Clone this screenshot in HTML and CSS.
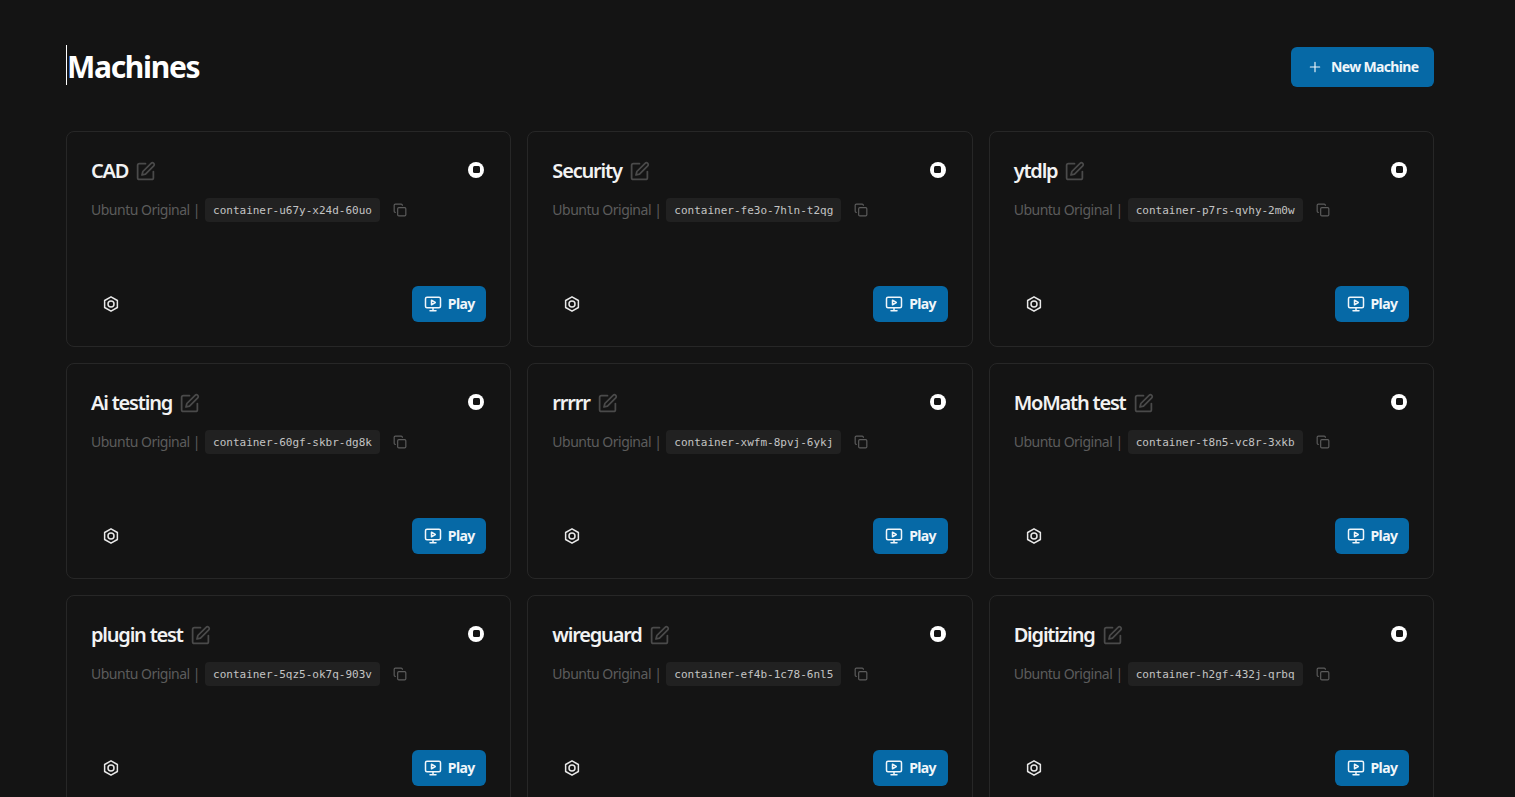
FILE: index.html
```html
<!DOCTYPE html>
<html lang="en">
<head>
  <meta charset="UTF-8" />
  <meta name="viewport" content="width=device-width, initial-scale=1.0" />
  <title>Machines</title>
  <link rel="stylesheet" href="styles.css">
</head>
<body>
  <svg class="icon-defs" width="0" height="0" aria-hidden="true">
    <symbol id="i-edit" viewBox="0 0 24 24" fill="none" stroke="currentColor" stroke-width="2" stroke-linecap="round" stroke-linejoin="round">
      <path d="M12 3H5a2 2 0 0 0-2 2v14a2 2 0 0 0 2 2h14a2 2 0 0 0 2-2v-7" />
      <path d="M18.4 2.600a2.100 2.100 0 1 1 3 3L12 15l-4 1 1-4z" />
    </symbol>
    <symbol id="i-copy" viewBox="0 0 24 24" fill="none" stroke="currentColor" stroke-width="2" stroke-linecap="round" stroke-linejoin="round">
      <rect x="8" y="8" width="14" height="14" rx="2" />
      <path d="M4 16c-1.100 0-2-.9-2-2V4c0-1.100.9-2 2-2h10c1.100 0 2 .9 2 2" />
    </symbol>
    <symbol id="i-settings" viewBox="0 0 24 24" fill="none" stroke="currentColor" stroke-width="2" stroke-linecap="round" stroke-linejoin="round">
      <path d="M12 2.500l8.500 4.800v9.400L12 21.500l-8.500-4.800V7.300z" />
      <circle cx="12" cy="12" r="4" />
    </symbol>
    <symbol id="i-play" viewBox="0 0 24 24" fill="none" stroke="currentColor" stroke-width="2" stroke-linecap="round" stroke-linejoin="round">
      <rect x="2" y="3" width="20" height="14" rx="2" />
      <path d="M12 17v4M8 21h8" />
      <path d="M10 7l5 3-5 3z" />
    </symbol>
  </svg>

  <main class="page">
    <!-- Header -->
    <header class="page-header">
      <h1 class="page-title">Machines</h1>
      <button class="btn btn-new">
        <svg class="btn-plus" viewBox="0 0 24 24" fill="none" stroke="currentColor" stroke-width="2" stroke-linecap="round"><path d="M5 12h14M12 5v14" /></svg>
        New Machine
      </button>
    </header>

    <!-- Machine cards -->
    <section class="machine-grid">
      <article class="card">
        <div class="card-top">
          <h2 class="card-name">CAD <svg class="icon-edit"><use href="#i-edit" /></svg></h2>
          <span class="status-dot"></span>
        </div>
        <div class="card-meta">
          <span class="os-name">Ubuntu Original |</span>
          <code class="container-id">container-u67y-x24d-60uo</code>
          <svg class="icon-copy"><use href="#i-copy" /></svg>
        </div>
        <div class="card-bottom">
          <svg class="icon-settings"><use href="#i-settings" /></svg>
          <button class="btn btn-play"><svg class="icon-play"><use href="#i-play" /></svg>Play</button>
        </div>
      </article>
      <article class="card">
        <div class="card-top">
          <h2 class="card-name">Security <svg class="icon-edit"><use href="#i-edit" /></svg></h2>
          <span class="status-dot"></span>
        </div>
        <div class="card-meta">
          <span class="os-name">Ubuntu Original |</span>
          <code class="container-id">container-fe3o-7hln-t2qg</code>
          <svg class="icon-copy"><use href="#i-copy" /></svg>
        </div>
        <div class="card-bottom">
          <svg class="icon-settings"><use href="#i-settings" /></svg>
          <button class="btn btn-play"><svg class="icon-play"><use href="#i-play" /></svg>Play</button>
        </div>
      </article>
      <article class="card">
        <div class="card-top">
          <h2 class="card-name">ytdlp <svg class="icon-edit"><use href="#i-edit" /></svg></h2>
          <span class="status-dot"></span>
        </div>
        <div class="card-meta">
          <span class="os-name">Ubuntu Original |</span>
          <code class="container-id">container-p7rs-qvhy-2m0w</code>
          <svg class="icon-copy"><use href="#i-copy" /></svg>
        </div>
        <div class="card-bottom">
          <svg class="icon-settings"><use href="#i-settings" /></svg>
          <button class="btn btn-play"><svg class="icon-play"><use href="#i-play" /></svg>Play</button>
        </div>
      </article>
      <article class="card">
        <div class="card-top">
          <h2 class="card-name">Ai testing <svg class="icon-edit"><use href="#i-edit" /></svg></h2>
          <span class="status-dot"></span>
        </div>
        <div class="card-meta">
          <span class="os-name">Ubuntu Original |</span>
          <code class="container-id">container-60gf-skbr-dg8k</code>
          <svg class="icon-copy"><use href="#i-copy" /></svg>
        </div>
        <div class="card-bottom">
          <svg class="icon-settings"><use href="#i-settings" /></svg>
          <button class="btn btn-play"><svg class="icon-play"><use href="#i-play" /></svg>Play</button>
        </div>
      </article>
      <article class="card">
        <div class="card-top">
          <h2 class="card-name">rrrrr <svg class="icon-edit"><use href="#i-edit" /></svg></h2>
          <span class="status-dot"></span>
        </div>
        <div class="card-meta">
          <span class="os-name">Ubuntu Original |</span>
          <code class="container-id">container-xwfm-8pvj-6ykj</code>
          <svg class="icon-copy"><use href="#i-copy" /></svg>
        </div>
        <div class="card-bottom">
          <svg class="icon-settings"><use href="#i-settings" /></svg>
          <button class="btn btn-play"><svg class="icon-play"><use href="#i-play" /></svg>Play</button>
        </div>
      </article>
      <article class="card">
        <div class="card-top">
          <h2 class="card-name">MoMath test <svg class="icon-edit"><use href="#i-edit" /></svg></h2>
          <span class="status-dot"></span>
        </div>
        <div class="card-meta">
          <span class="os-name">Ubuntu Original |</span>
          <code class="container-id">container-t8n5-vc8r-3xkb</code>
          <svg class="icon-copy"><use href="#i-copy" /></svg>
        </div>
        <div class="card-bottom">
          <svg class="icon-settings"><use href="#i-settings" /></svg>
          <button class="btn btn-play"><svg class="icon-play"><use href="#i-play" /></svg>Play</button>
        </div>
      </article>
      <article class="card">
        <div class="card-top">
          <h2 class="card-name">plugin test <svg class="icon-edit"><use href="#i-edit" /></svg></h2>
          <span class="status-dot"></span>
        </div>
        <div class="card-meta">
          <span class="os-name">Ubuntu Original |</span>
          <code class="container-id">container-5qz5-ok7q-903v</code>
          <svg class="icon-copy"><use href="#i-copy" /></svg>
        </div>
        <div class="card-bottom">
          <svg class="icon-settings"><use href="#i-settings" /></svg>
          <button class="btn btn-play"><svg class="icon-play"><use href="#i-play" /></svg>Play</button>
        </div>
      </article>
      <article class="card">
        <div class="card-top">
          <h2 class="card-name">wireguard <svg class="icon-edit"><use href="#i-edit" /></svg></h2>
          <span class="status-dot"></span>
        </div>
        <div class="card-meta">
          <span class="os-name">Ubuntu Original |</span>
          <code class="container-id">container-ef4b-1c78-6nl5</code>
          <svg class="icon-copy"><use href="#i-copy" /></svg>
        </div>
        <div class="card-bottom">
          <svg class="icon-settings"><use href="#i-settings" /></svg>
          <button class="btn btn-play"><svg class="icon-play"><use href="#i-play" /></svg>Play</button>
        </div>
      </article>
      <article class="card">
        <div class="card-top">
          <h2 class="card-name">Digitizing <svg class="icon-edit"><use href="#i-edit" /></svg></h2>
          <span class="status-dot"></span>
        </div>
        <div class="card-meta">
          <span class="os-name">Ubuntu Original |</span>
          <code class="container-id">container-h2gf-432j-qrbq</code>
          <svg class="icon-copy"><use href="#i-copy" /></svg>
        </div>
        <div class="card-bottom">
          <svg class="icon-settings"><use href="#i-settings" /></svg>
          <button class="btn btn-play"><svg class="icon-play"><use href="#i-play" /></svg>Play</button>
        </div>
      </article>
    </section>
  </main>
</body>
</html>
```

FILE: styles.css
```css
/* General styles */
html,
body {
  height: 100%;
  overflow: hidden;
}
body {
  margin: 0;
  background-color: #141414;
  color: #fff;
  font-family: "Noto Sans", sans-serif;
}
.icon-defs {
  display: block;
  height: 0;
}
.page {
  padding: 47px 81px 0 66px;
}
/* Header */
.page-header {
  display: flex;
  align-items: flex-start;
  justify-content: space-between;
  margin-bottom: 44px;
}
.page-title {
  margin: -2px 0 0;
  height: 40px;
  border-left: 1px solid #fff;
  font-size: 30px;
  line-height: 44px;
  font-weight: 700;
  letter-spacing: -1.3px;
}
/* Buttons */
.btn {
  display: flex;
  align-items: center;
  border: none;
  background-color: #0669a6;
  color: #f0f6fa;
  font-family: inherit;
  font-weight: 700;
  cursor: pointer;
}
.btn-new {
  width: 143px;
  height: 40px;
  padding: 0 0 2px 16px;
  gap: 8px;
  border-radius: 6px;
  font-size: 14px;
  letter-spacing: -0.65px;
}
.btn-plus {
  width: 16px;
  height: 16px;
  stroke-width: 1.75;
  margin-top: 2px;
}
.btn-play {
  width: 74.5px;
  height: 36px;
  padding: 0 0 2px 12px;
  gap: 6px;
  border-radius: 6px;
  font-size: 14px;
  letter-spacing: -0.6px;
}
/* Cards */
.machine-grid {
  display: grid;
  grid-template-columns: repeat(3, 1fr);
  gap: 16px;
}
.card {
  box-sizing: border-box;
  height: 216px;
  padding: 24px;
  display: flex;
  flex-direction: column;
  border: 1px solid #272727;
  border-radius: 8px;
}
.card-top {
  display: flex;
  align-items: center;
  justify-content: space-between;
  height: 28px;
  margin-top: 1px;
}
.card-name {
  display: flex;
  align-items: center;
  gap: 7px;
  margin: 0;
  font-size: 20px;
  line-height: 28px;
  font-weight: 600;
  letter-spacing: -1.2px;
  color: #f2f2f2;
}
.icon-edit {
  width: 21px;
  height: 21px;
  color: #4a4a4a;
}
.status-dot {
  box-sizing: border-box;
  display: flex;
  align-items: center;
  justify-content: center;
  width: 16px;
  height: 16px;
  margin-right: 2px;
  margin-top: -3px;
  border-radius: 50%;
  background-color: #fff;
}
.status-dot::after {
  content: "";
  width: 7px;
  height: 7px;
  border-radius: 1.5px;
  background-color: #141414;
}
.card-meta {
  display: flex;
  align-items: center;
  height: 24px;
  margin-top: 12px;
}
.os-name {
  font-size: 14px;
  color: #5c5c5c;
  letter-spacing: -0.5px;
}
.container-id {
  margin: 2px 0 0 5px;
  padding: 5px 8px 3px;
  border-radius: 4px;
  background-color: #212121;
  font-family: "DejaVu Sans Mono", monospace;
  font-size: 11px;
  line-height: 16px;
  color: #c4c4c4;
}
.icon-copy {
  width: 14px;
  height: 14px;
  margin: 2px 0 0 13px;
  color: #5c5c5c;
}
.card-bottom {
  display: flex;
  align-items: center;
  justify-content: space-between;
  margin-top: auto;
  padding-left: 11px;
}
.icon-settings {
  width: 18px;
  height: 18px;
  color: #e8e8e8;
}
.icon-play {
  flex: none;
  width: 18px;
  height: 18px;
  margin-top: 2px;
}
```
